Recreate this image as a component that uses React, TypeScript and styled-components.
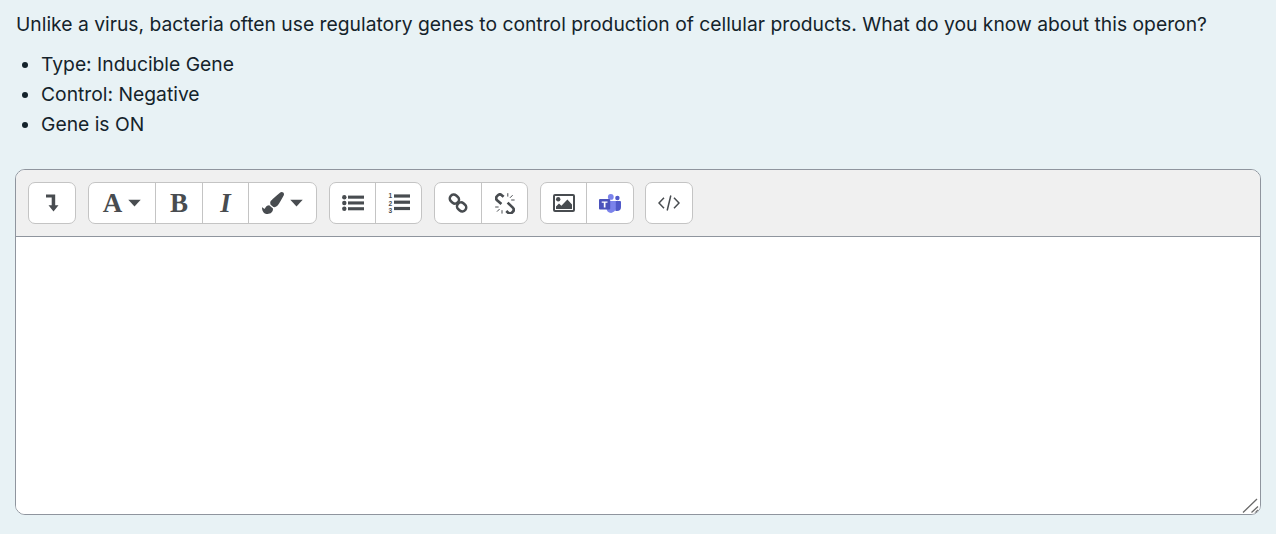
import React from "react";
import styled, { createGlobalStyle } from "styled-components";
import { FaPaintBrush } from "react-icons/fa";

const Global = createGlobalStyle`
  html, body { margin: 0; padding: 0; background: #e8f2f5; }
  body { font-family: Inter, "Liberation Sans", sans-serif; color: #14232b; }
`;

const Page = styled.div`
  width: 1276px;
  height: 534px;
  overflow: hidden;
  padding: 12px 15px 0;
  box-sizing: border-box;
`;
const Question = styled.p`
  margin: 0 0 0 1px;
  font-size: 19.3px;
  line-height: 24px;
  white-space: nowrap;
  color: #14232b;
`;
const Facts = styled.ul`
  margin: 13px 0 0;
  padding: 0 0 0 26px;
  list-style: disc;
  font-size: 19.3px;
  line-height: 30px;
  color: #14232b;
`;
const Editor = styled.div`
  margin-top: 30px;
  width: 1246px;
  height: 346px;
  box-sizing: border-box;
  border: 1px solid #8f959e;
  border-radius: 10px;
  background: #fff;
  display: flex;
  flex-direction: column;
  overflow: hidden;
  position: relative;
`;
const Toolbar = styled.div`
  height: 67px;
  box-sizing: border-box;
  background: #f0f0f0;
  border-bottom: 1px solid #8f959e;
  padding: 12px 0 0 12px;
  display: flex;
  align-items: flex-start;
`;
const Group = styled.div<{ $gap?: number }>`
  display: flex;
  height: 42px;
  box-sizing: border-box;
  margin-right: ${(p) => p.$gap ?? 12}px;
  background: #fff;
  border: 1px solid #c4c4c4;
  border-radius: 7px;
`;
const Btn = styled.div<{ $w: number }>`
  width: ${(p) => p.$w}px;
  box-sizing: border-box;
  display: flex;
  align-items: center;
  justify-content: center;
  gap: 6px;
  color: #484c50;
  & + & { border-left: 1px solid #c4c4c4; }
  svg { display: block; flex: none; }
`;
const Glyph = styled.span<{ $italic?: boolean }>`
  font-family: "Liberation Serif", serif;
  font-weight: 700;
  font-style: ${(p) => (p.$italic ? "italic" : "normal")};
  font-size: 27px;
  line-height: 1;
  color: #484c50;
`;
const Area = styled.div`
  flex: 1;
  background: #fff;
`;
const Grip = styled.svg`
  position: absolute;
  right: 0;
  bottom: 0;
`;

const Collapse = () => (
  <svg width="14" height="18" viewBox="0 0 14 18">
    <path d="M1 0.5h9.2v10.8h3.3L8.5 17.5l-5-6.2h3.2V3.6H1z" fill="#484c50" />
  </svg>
);
const Caret = () => (
  <svg width="13" height="8" viewBox="0 0 13 8"><path d="M0.3 0.8h12.4L6.5 7.4z" fill="#484c50" /></svg>
);
const BulletList = () => (
  <svg width="22" height="16" viewBox="0 0 22 16" fill="#484c50">
    <circle cx="2.3" cy="2.2" r="2.2" />
    <circle cx="2.3" cy="8" r="2.2" />
    <circle cx="2.3" cy="13.8" r="2.2" />
    <rect x="6" y="0.6" width="16" height="3.1" />
    <rect x="6" y="6.4" width="16" height="3.1" />
    <rect x="6" y="12.2" width="16" height="3.1" />
  </svg>
);
const NumberList = () => (
  <svg width="22" height="26" viewBox="0 0 22 26" fill="#484c50">
    <text x="0.4" y="8" fontFamily="'Liberation Sans', sans-serif" fontWeight="700" fontSize="6.6">1</text>
    <text x="0.4" y="15.7" fontFamily="'Liberation Sans', sans-serif" fontWeight="700" fontSize="6.6">2</text>
    <text x="0.4" y="23.4" fontFamily="'Liberation Sans', sans-serif" fontWeight="700" fontSize="6.6">3</text>
    <rect x="6" y="4.4" width="16" height="3.2" />
    <rect x="6" y="10.6" width="16" height="3.2" />
    <rect x="6" y="16.9" width="16" height="3.2" />
  </svg>
);
const Chain = () => (
  <svg width="20" height="20" viewBox="0 0 20 20" fill="none" stroke="#484c50" strokeWidth="2.6">
    <rect x="1.6" y="2.2" width="9.6" height="7.8" rx="3.9" transform="rotate(40 6.4 6.1)" />
    <rect x="8.8" y="10" width="9.6" height="7.8" rx="3.9" transform="rotate(40 13.6 13.9)" />
  </svg>
);
const BrokenChain = () => (
  <svg width="20" height="21" viewBox="0 0 20 21" fill="none" stroke="#484c50">
    <path d="M8.6 3.8 7 2.4a3 3 0 0 0-4.2 0l-.7.7a3 3 0 0 0 0 4.2L6.4 11" strokeWidth="2.7" />
    <path d="M12.6 9.6l5.2 5a3 3 0 0 1 0 4.2l-.7.7a3 3 0 0 1-4.2 0l-1.6-1.5" strokeWidth="2.7" />
    <path d="M12.8 0.2v3.4M17.6 2.2l-2.6 2.6M19.6 7h-3.4M0.2 14h3.4M2 18.6l2.6-2.6M7 20.6v-3.4" strokeWidth="1" />
  </svg>
);
const Picture = () => (
  <svg width="22" height="18" viewBox="0 0 22 18">
    <rect x="1" y="1" width="20" height="16" rx="1" fill="#fff" stroke="#484c50" strokeWidth="2" />
    <circle cx="5.2" cy="5.2" r="2.2" fill="#484c50" />
    <path d="M3 15v-2.6l3-3 2.4 2.4 6-6.2L19 10.4V15z" fill="#484c50" />
  </svg>
);
const Teams = () => (
  <svg width="22" height="19" viewBox="0 0 22 19">
    <circle cx="11.8" cy="2.9" r="2.9" fill="#7b83eb" />
    <circle cx="18.4" cy="4" r="2.2" fill="#5059c9" />
    <path d="M14.5 7h6.5a1 1 0 0 1 1 1v5a4 4 0 0 1-4 4h-1.5z" fill="#5059c9" />
    <path d="M7.5 6.9h9.3v7a5 5 0 0 1-4.7 5 5 5 0 0 1-4.6-5z" fill="#7b83eb" />
    <rect x="0" y="5" width="11.2" height="10.4" rx="1" fill="#4b53bc" />
    <path d="M2.7 7.4h5.8v1.4H6.5v4.8H4.8V8.8H2.7z" fill="#fff" />
  </svg>
);
const Code = () => (
  <svg width="22" height="16" viewBox="0 0 22 16" fill="none" stroke="#484c50" strokeWidth="1.5">
    <path d="M6 2.8 1 8l5 5.2M16 2.8 21 8l-5 5.2M12.8 0.5 9.2 15.5" />
  </svg>
);

export default function App() {
  return (
    <Page>
      <Global />
      <Question>
        Unlike a virus, bacteria often use regulatory genes to control production of cellular products. What do you know about this operon?
      </Question>
      <Facts>
        <li>Type: Inducible Gene</li>
        <li>Control: Negative</li>
        <li>Gene is ON</li>
      </Facts>
      <Editor>
        <Toolbar>
          <Group>
            <Btn $w={46}><Collapse /></Btn>
          </Group>
          <Group>
            <Btn $w={66}><Glyph>A</Glyph><Caret /></Btn>
            <Btn $w={47}><Glyph>B</Glyph></Btn>
            <Btn $w={46}><Glyph $italic>I</Glyph></Btn>
            <Btn $w={68}><FaPaintBrush size={22} /><Caret /></Btn>
          </Group>
          <Group>
            <Btn $w={45}><BulletList /></Btn>
            <Btn $w={46}><NumberList /></Btn>
          </Group>
          <Group>
            <Btn $w={46}><Chain /></Btn>
            <Btn $w={46}><BrokenChain /></Btn>
          </Group>
          <Group $gap={11}>
            <Btn $w={45}><Picture /></Btn>
            <Btn $w={47}><Teams /></Btn>
          </Group>
          <Group $gap={0}>
            <Btn $w={46}><Code /></Btn>
          </Group>
        </Toolbar>
        <Area />
        <Grip width="18" height="16" viewBox="0 0 18 16" fill="none" stroke="#6a6a6a" strokeWidth="1.3">
          <path d="M1 14.5 15 1M9.5 14.5 16 8.5M13 15 16 12" />
        </Grip>
      </Editor>
    </Page>
  );
}
